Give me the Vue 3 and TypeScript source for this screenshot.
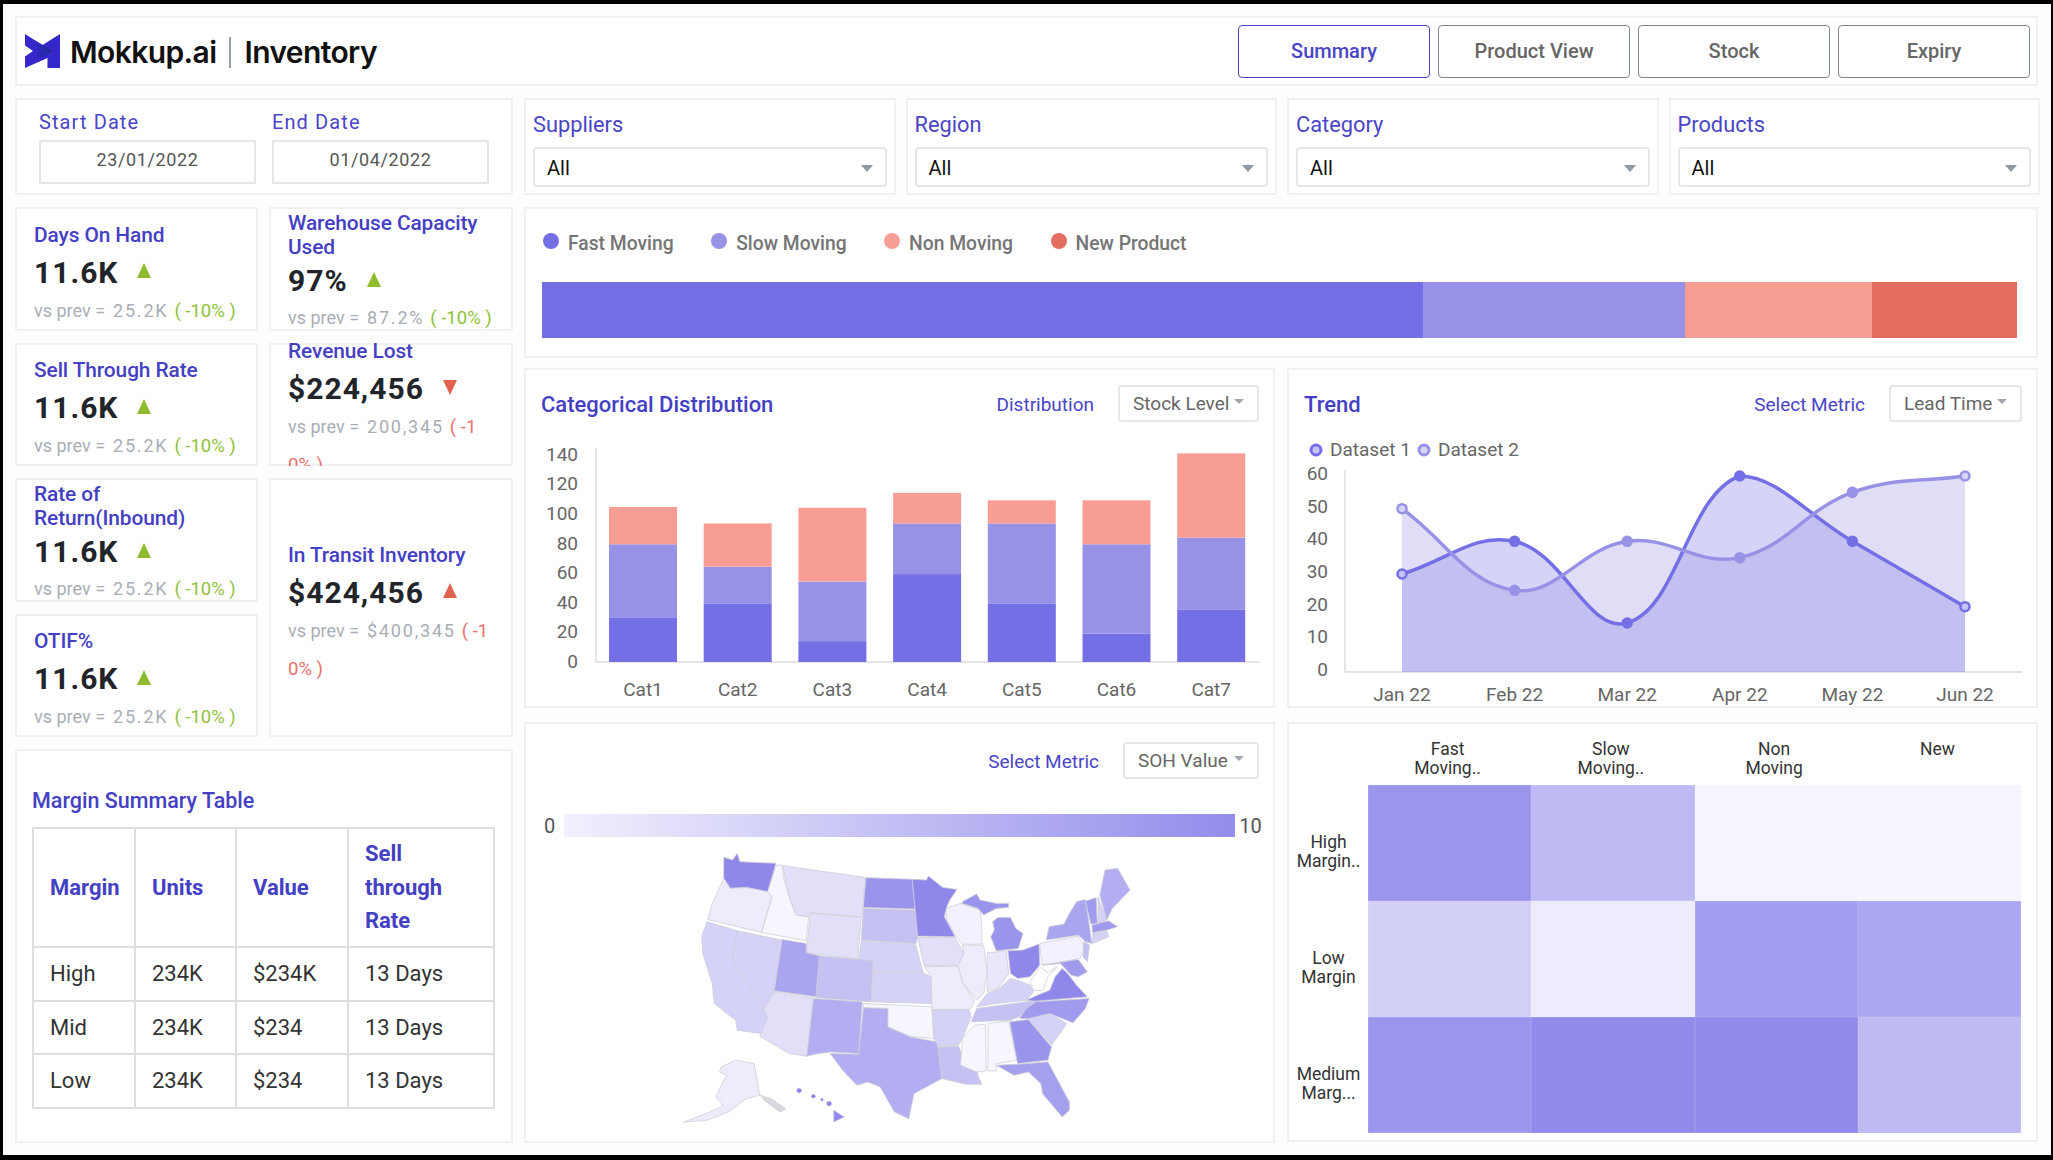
<script setup lang="ts">
const tabs = ['Summary', 'Product View', 'Stock', 'Expiry']
const filters = ['Suppliers', 'Region', 'Category', 'Products']
const legend = [
  { label: 'Fast Moving', color: '#756fe6' },
  { label: 'Slow Moving', color: '#9892e6' },
  { label: 'Non Moving', color: '#f89d94' },
  { label: 'New Product', color: '#e26d60' },
]
const stockBar = [
  { width: 881, color: '#756fe6' },
  { width: 262, color: '#9892e6' },
  { width: 187, color: '#f89d94' },
  { width: 145, color: '#e26d60' },
]

interface Kpi {
  title: string
  value: string
  prev: string
  delta: string
  // the two red tiles break their delta mid-number, as the reference does
  deltaRest?: string
  dir: 'up' | 'down'
  tone: 'good' | 'bad'
  twoLine?: boolean
}
const kpis: Kpi[] = [
  { title: 'Days On Hand', value: '11.6K', prev: '25.2K', delta: '( -10% )', dir: 'up', tone: 'good' },
  { title: 'Warehouse Capacity Used', value: '97%', prev: '87.2%', delta: '( -10% )', dir: 'up', tone: 'good', twoLine: true },
  { title: 'Sell Through Rate', value: '11.6K', prev: '25.2K', delta: '( -10% )', dir: 'up', tone: 'good' },
  { title: 'Revenue Lost', value: '$224,456', prev: '200,345', delta: '( -1', deltaRest: '0% )', dir: 'down', tone: 'bad' },
  { title: 'Rate of Return(Inbound)', value: '11.6K', prev: '25.2K', delta: '( -10% )', dir: 'up', tone: 'good', twoLine: true },
  { title: 'In Transit Inventory', value: '$424,456', prev: '$400,345', delta: '( -1', deltaRest: '0% )', dir: 'up', tone: 'bad' },
  { title: 'OTIF%', value: '11.6K', prev: '25.2K', delta: '( -10% )', dir: 'up', tone: 'good' },
]

const marginRows = [
  ['High', '234K', '$234K', '13 Days'],
  ['Mid', '234K', '$234', '13 Days'],
  ['Low', '234K', '$234', '13 Days'],
]

// stacked bars, drawn in page coordinates
const barBase = 662
const barUnit = 1.49
const barColors = ['#756fe6', '#9892e6', '#f89d94']
const barData = [
  [30, 49, 25],
  [39, 25, 29],
  [14, 40, 49.5],
  [59, 34, 20.5],
  [39, 54, 15.5],
  [19, 60, 29.5],
  [35, 48.5, 56.5],
]
const barTicks = [0, 20, 40, 60, 80, 100, 120, 140]
const bars = barData.map((vals, i) => {
  let acc = 0
  const x = 609 + i * 94.7
  return {
    name: `Cat${i + 1}`,
    x,
    rects: vals.map((v, k) => {
      acc += v
      return { y: barBase - acc * barUnit, h: v * barUnit, color: barColors[k] }
    }),
  }
})

// trend lines
const trendBase = 672
const trendUnit = 3.267
const trendX = (i: number) => 1402 + i * 112.6
const trendY = (v: number) => trendBase - v * trendUnit
const trendTicks = [0, 10, 20, 30, 40, 50, 60]
const months = ['Jan 22', 'Feb 22', 'Mar 22', 'Apr 22', 'May 22', 'Jun 22']
const clampY = (y: number) => Math.min(trendBase, Math.max(trendY(60), y))

function splinePath(values: number[]) {
  const pts = values.map((v, i) => ({ x: trendX(i), y: trendY(v) }))
  const t = 0.4
  const ctrl = pts.map((p, i) => {
    const a = pts[Math.max(i - 1, 0)]
    const b = pts[Math.min(i + 1, pts.length - 1)]
    const d01 = Math.hypot(p.x - a.x, p.y - a.y)
    const d12 = Math.hypot(b.x - p.x, b.y - p.y)
    const sum = d01 + d12 || 1
    const fa = (t * d01) / sum
    const fb = (t * d12) / sum
    return {
      px: p.x - fa * (b.x - a.x),
      py: clampY(p.y - fa * (b.y - a.y)),
      nx: p.x + fb * (b.x - a.x),
      ny: clampY(p.y + fb * (b.y - a.y)),
    }
  })
  let d = `M${pts[0].x} ${pts[0].y}`
  for (let i = 1; i < pts.length; i++) {
    d += ` C${ctrl[i - 1].nx} ${ctrl[i - 1].ny} ${ctrl[i].px} ${ctrl[i].py} ${pts[i].x} ${pts[i].y}`
  }
  return d
}

const series = [
  { name: 'Dataset 1', values: [30, 40, 15, 60, 40, 20], stroke: '#756fe6', dot: '#c5c2f5', fill: 'rgba(117,111,230,.3)', lx: 1316 },
  { name: 'Dataset 2', values: [50, 25, 40, 35, 55, 60], stroke: '#9892e6', dot: '#d6d4f7', fill: 'rgba(152,146,230,.3)', lx: 1424 },
].map((s) => {
  const line = splinePath(s.values)
  return {
    ...s,
    line,
    area: `${line} L${trendX(5)} ${trendBase} L${trendX(0)} ${trendBase} Z`,
    dots: s.values.map((v, i) => ({
      x: trendX(i),
      y: trendY(v),
      fill: i === 0 || i === s.values.length - 1 ? s.dot : s.stroke,
    })),
  }
})

// state shapes traced off the reference, viewBox is in its own units
const states = [
  { c: '#8f88ea', p: '237,172 262,180 275,160 282,185 383,190 360,275 300,262 255,265 237,235' },
  { c: '#eeecfb', p: '237,235 255,265 300,262 360,275 372,290 343,397 192,358 205,310' },
  { c: '#f6f6fe', p: '385,195 400,195 405,235 425,305 440,345 475,350 468,422 343,397 372,290 360,275' },
  { c: '#e2dff9', p: '403,197 632,232 625,350 478,338 475,350 440,345 425,305 413,260' },
  { c: '#e2dff9', p: '480,340 622,352 612,477 468,458' },
  { c: '#9a95ec', p: '635,233 765,238 773,327 628,322' },
  { c: '#c5c1f3', p: '628,325 773,330 780,410 775,432 745,428 622,420' },
  { c: '#d5d2f7', p: '622,422 745,430 775,435 795,516 655,514 655,482 615,478' },
  { c: '#c5c1f3', p: '505,467 655,482 650,605 495,592' },
  { c: '#d5d2f7', p: '655,517 795,518 818,530 818,610 652,605' },
  { c: '#aaa5ef', p: '400,418 468,430 468,458 505,467 495,590 378,572' },
  { c: '#d5d2f7', p: '275,392 400,420 378,572 360,628 345,618 260,482' },
  { c: '#d5d2f7', p: '190,365 275,392 260,482 345,618 360,655 340,700 275,690 270,660 210,610 205,550 178,460 175,410' },
  { c: '#e2dff9', p: '378,575 488,593 470,768 420,760 338,708 358,655 350,625' },
  { c: '#b3aef1', p: '488,595 625,605 615,760 535,755 490,762 470,768' },
  { c: '#b3aef1', p: '628,622 697,625 697,680 760,710 835,725 848,835 770,880 755,955 715,935 675,860 640,845 610,855 570,810 535,760 615,762' },
  { c: '#f6f6fe', p: '628,610 820,620 825,715 760,708 697,680 697,625 628,622' },
  { c: '#8f88ea', p: '765,238 805,240 810,228 850,262 890,268 870,300 860,325 855,350 885,410 780,408 773,327' },
  { c: '#e2dff9', p: '780,412 885,412 910,460 895,495 798,497' },
  { c: '#eeecfb', p: '800,500 895,498 905,545 940,605 925,630 820,628 818,530' },
  { c: '#d5d2f7', p: '822,630 925,628 930,650 905,715 895,735 838,738 826,715' },
  { c: '#c5c1f3', p: '838,740 895,738 905,770 945,790 950,830 960,852 915,852 848,835' },
  { c: '#f2f1fd', p: '860,325 900,310 955,330 960,380 960,432 905,432 885,405 860,355' },
  { c: '#eeecfb', p: '905,435 965,435 975,520 965,580 945,600 905,545 893,495 910,460' },
  { c: '#9a95ec', p: '905,305 945,282 955,300 1000,310 1035,310 1035,322 1000,325 965,345 950,325 905,310' },
  { c: '#9a95ec', p: '990,365 1005,352 1040,352 1055,385 1075,400 1062,445 1000,452 985,410 995,390' },
  { c: '#e9e7fb', p: '975,458 1028,452 1035,520 1005,565 975,575' },
  { c: '#8f88ea', p: '1033,452 1075,450 1120,432 1122,495 1095,530 1060,535 1040,520' },
  { c: '#d5d2f7', p: '945,620 975,580 1005,568 1040,535 1060,540 1095,555 1105,575 1085,600 1000,610' },
  { c: '#c5c1f3', p: '930,665 945,625 1085,605 1110,600 1065,650 1040,660' },
  { c: '#f6f6fe', p: '905,715 940,675 970,672 972,812 945,815 900,795' },
  { c: '#f6f6fe', p: '977,670 1035,663 1058,780 1000,790 1000,812 977,812' },
  { c: '#9a95ec', p: '1038,665 1090,658 1155,740 1145,780 1060,790' },
  { c: '#a5a0ee', p: '1000,795 1060,792 1145,785 1205,905 1205,930 1185,950 1130,880 1125,850 1090,815 1050,825' },
  { c: '#d5d2f7', p: '1090,655 1150,640 1198,670 1155,735' },
  { c: '#a09bed', p: '1065,655 1085,625 1110,605 1260,595 1250,625 1215,668 1150,640 1090,655' },
  { c: '#8f88ea', p: '1085,600 1115,585 1150,570 1165,530 1185,505 1200,520 1225,555 1255,590 1110,603' },
  { c: '#ffffff', p: '1095,545 1122,500 1145,518 1170,500 1145,530 1130,572 1105,570' },
  { c: '#f2f1fd', p: '1122,430 1230,408 1248,445 1235,475 1128,495' },
  { c: '#aaa5ef', p: '1140,420 1148,380 1190,372 1205,340 1225,305 1250,298 1260,370 1268,430 1250,425 1230,405' },
  { c: '#a09bed', p: '1130,495 1230,478 1255,515 1230,530 1210,525 1180,490' },
  { c: '#c5c1f3', p: '1245,425 1262,435 1255,485 1243,470' },
  { c: '#a09bed', p: '1250,303 1280,293 1283,370 1265,372' },
  { c: '#d5d2f7', p: '1285,290 1310,360 1285,370' },
  { c: '#b3aef1', p: '1305,210 1340,205 1375,270 1325,325 1310,360 1290,285' },
  { c: '#a09bed', p: '1268,375 1315,362 1340,380 1310,390 1270,398' },
  { c: '#d5d2f7', p: '1270,400 1310,392 1315,410 1270,430' },
  { c: '#eeecfb', p: '230,800 270,780 322,790 338,885 300,895 250,935 190,960 125,965 210,930 235,915 215,890 232,850 245,825 225,815' },
  { c: '#d8d8de', p: '340,885 370,895 410,925 395,935 350,900' },
  { c: '#8f88ea', p: '545,930 575,950 545,965' },
]
const islands = [
  { x: 448, y: 871, r: 7 },
  { x: 488, y: 888, r: 6 },
  { x: 512, y: 898, r: 4 },
  { x: 532, y: 910, r: 7 },
]

const heatCols = [['Fast', 'Moving..'], ['Slow', 'Moving..'], ['Non', 'Moving'], ['New']]
const heatRows = [
  { label: ['High', 'Margin..'], cells: ['#9b95ee', '#bebaf4', '#f5f5fe', '#f5f5fe'] },
  { label: ['Low', 'Margin'], cells: ['#d2cff7', '#eeebfc', '#a39ef0', '#aba7f1'] },
  { label: ['Medium', 'Marg...'], cells: ['#9b95ee', '#928beb', '#928beb', '#bebaf4'] },
]
</script>

<template>
  <div class="page">
    <header class="card topbar">
      <div class="brand">
        <svg class="logo" viewBox="0 0 35 34" width="35" height="34">
          <defs>
            <linearGradient id="logoFade" x1="0" x2="1" y1="0" y2="0">
              <stop offset="0" stop-color="#3527c9" />
              <stop offset="1" stop-color="#1c2a90" />
            </linearGradient>
          </defs>
          <path d="M0 0L17.5 11L35 0V34H22.5V24L0 34V22.5L8 17L0 11.5Z" fill="#3527c9" />
          <path d="M9 6L28 17L9 28L14 17Z" fill="url(#logoFade)" />
        </svg>
        <span class="brand-name">Mokkup.ai</span>
        <span class="brand-rule" />
        <span class="brand-name">Inventory</span>
      </div>
      <nav class="tabs">
        <button v-for="(tab, i) in tabs" :key="tab" class="tab" :class="{ active: i === 0 }">{{ tab }}</button>
      </nav>
    </header>

    <div class="body">
      <aside class="side">
        <section class="card dates">
          <div class="date">
            <div class="date-label">Start Date</div>
            <div class="date-box">23/01/2022</div>
          </div>
          <div class="date">
            <div class="date-label">End Date</div>
            <div class="date-box">01/04/2022</div>
          </div>
        </section>

        <section class="kpis">
          <div v-for="k in kpis" :key="k.title" class="card kpi" :class="{ 'two-line': k.twoLine }">
            <div class="kpi-title">{{ k.title }}</div>
            <div class="kpi-value">
              {{ k.value }}
              <span class="tri" :class="[k.dir, k.tone]" />
            </div>
            <div class="kpi-prev">
              <span class="prev-label">vs prev =</span>
              <span class="prev-value">{{ k.prev }}</span>
              <span class="prev-delta" :class="k.tone">{{ k.delta }}<template v-if="k.deltaRest"><br />{{ k.deltaRest }}</template></span>
            </div>
          </div>
        </section>

        <section class="card margin">
          <h3 class="margin-title">Margin Summary Table</h3>
          <table class="margin-table">
            <colgroup>
              <col style="width: 102px" />
              <col style="width: 101px" />
              <col style="width: 112px" />
              <col />
            </colgroup>
            <thead>
              <tr>
                <th>Margin</th>
                <th>Units</th>
                <th>Value</th>
                <th>Sell through Rate</th>
              </tr>
            </thead>
            <tbody>
              <tr v-for="row in marginRows" :key="row[0]">
                <td v-for="cell in row" :key="cell">{{ cell }}</td>
              </tr>
            </tbody>
          </table>
        </section>
      </aside>

      <main class="main">
        <section class="filters">
          <div v-for="f in filters" :key="f" class="card filter">
            <div class="filter-label">{{ f }}</div>
            <div class="select">All<span class="select-arrow" /></div>
          </div>
        </section>

        <section class="card stock">
          <div class="stock-legend">
            <span v-for="l in legend" :key="l.label" class="stock-key">
              <i :style="{ background: l.color }" />{{ l.label }}
            </span>
          </div>
          <div class="stock-bar">
            <span v-for="s in stockBar" :key="s.color" :style="{ width: s.width + 'px', background: s.color }" />
          </div>
        </section>

        <section class="charts">
          <div class="card chart">
            <div class="chart-head">
              <h3 class="chart-title">Categorical Distribution</h3>
              <span class="chart-link">Distribution</span>
              <span class="drop stock-drop">Stock Level<i /></span>
            </div>
            <svg class="plot" viewBox="526 440 747 266" width="747" height="266">
              <line x1="596" y1="448" x2="596" y2="662" class="axis" />
              <line x1="596" y1="662" x2="1260" y2="662" class="axis" />
              <text v-for="t in barTicks" :key="t" x="578" :y="662 - (t / 20) * 29.6 + 6" text-anchor="end" class="tick">{{ t }}</text>
              <g v-for="b in bars" :key="b.name">
                <rect v-for="r in b.rects" :key="r.color" :x="b.x" :y="r.y" width="68" :height="r.h" :fill="r.color" />
                <text :x="b.x + 34" y="696" text-anchor="middle" class="tick">{{ b.name }}</text>
              </g>
            </svg>
          </div>

          <div class="card chart">
            <div class="chart-head">
              <h3 class="chart-title">Trend</h3>
              <span class="chart-link">Select Metric</span>
              <span class="drop lead-drop">Lead Time<i /></span>
            </div>
            <svg class="plot" viewBox="1289 440 747 266" width="747" height="266">
              <g v-for="s in series" :key="s.name">
                <circle :cx="s.lx" cy="450" r="5" :fill="s.dot" :stroke="s.stroke" stroke-width="3" />
                <text :x="s.lx + 14" y="456" class="tick">{{ s.name }}</text>
              </g>
              <line x1="1345" y1="470" x2="1345" y2="672" class="axis" />
              <line x1="1345" y1="672" x2="2022" y2="672" class="axis" />
              <text v-for="t in trendTicks" :key="t" x="1328" :y="672 - t * 3.267 + 4" text-anchor="end" class="tick">{{ t }}</text>
              <text v-for="(m, i) in months" :key="m" :x="trendX(i)" y="701" text-anchor="middle" class="tick">{{ m }}</text>
              <path v-for="s in series" :key="s.name" :d="s.area" :fill="s.fill" />
              <g v-for="s in series" :key="s.name">
                <path :d="s.line" fill="none" :stroke="s.stroke" stroke-width="3.5" />
                <circle v-for="d in s.dots" :key="d.x" :cx="d.x" :cy="d.y" r="4.5" :fill="d.fill" :stroke="s.stroke" stroke-width="2.5" />
              </g>
            </svg>
          </div>
        </section>

        <section class="bottom">
          <div class="card geo">
            <div class="geo-head">
              <span class="chart-link">Select Metric</span>
              <span class="drop soh-drop">SOH Value<i /></span>
            </div>
            <div class="scale">
              <span>0</span>
              <div class="scale-bar" />
              <span>10</span>
            </div>
            <svg class="map" viewBox="120 150 1280 830" width="457" height="277" preserveAspectRatio="none">
              <polygon v-for="s in states" :key="s.p" :points="s.p" :fill="s.c" stroke="#cdcdd6" stroke-width="2.2" stroke-linejoin="round" />
              <circle v-for="d in islands" :key="d.x" :cx="d.x" :cy="d.y" :r="d.r" fill="#8f88ea" />
            </svg>
          </div>

          <div class="card heat">
            <div class="heat-cols">
              <div v-for="(c, i) in heatCols" :key="i" class="heat-col">
                <div v-for="line in c" :key="line">{{ line }}</div>
              </div>
            </div>
            <div class="heat-body">
              <div class="heat-labels">
                <div v-for="r in heatRows" :key="r.label[0]" class="heat-label">
                  <div v-for="line in r.label" :key="line">{{ line }}</div>
                </div>
              </div>
              <div class="heat-grid">
                <template v-for="r in heatRows" :key="r.label[0]">
                  <div v-for="(cell, i) in r.cells" :key="i" class="heat-cell" :style="{ background: cell }" />
                </template>
              </div>
            </div>
          </div>
        </section>
      </main>
    </div>
  </div>
</template>

<style scoped>
.page {
  box-sizing: border-box;
  width: 2053px;
  height: 1160px;
  overflow: hidden;
  padding: 12px 13px 12px 12px;
  border-style: solid;
  border-color: #000;
  border-width: 4px 2px 5px 3px;
  background: #fdfdfd;
  font-family: Roboto, "Liberation Sans", sans-serif;
  color: #333;
}
.card {
  box-sizing: border-box;
  background: #fff;
  border: 2px solid #f1f1f1;
}
h3 {
  margin: 0;
  font-weight: 500;
}

/* top bar */
.topbar {
  display: flex;
  align-items: center;
  justify-content: space-between;
  height: 70px;
  padding: 0 6px 0 8px;
  width: 2023px;
}
.brand {
  display: flex;
  align-items: center;
  font-family: Inter, Roboto, sans-serif;
}
.logo {
  margin-right: 10px;
}
.brand-name {
  padding-top: 2px;
  font-size: 30px;
  font-weight: 600;
  letter-spacing: -0.6px;
  color: #111;
}
.brand-rule {
  width: 2px;
  height: 31px;
  margin: 2px 13px 0;
  background: #9aa2b1;
}
.tabs {
  display: flex;
  gap: 8px;
}
.tab {
  box-sizing: border-box;
  width: 192px;
  height: 53px;
  background: #fff;
  border: 1.5px solid #7a848c;
  border-radius: 4px;
  font: 500 20px Roboto, sans-serif;
  color: #666;
}
.tab.active {
  border-color: #4a45c6;
  color: #4a45c6;
}

/* page columns */
.body {
  display: flex;
  gap: 11px;
  margin-top: 12px;
}
.side {
  display: flex;
  flex-direction: column;
  gap: 12px;
  width: 498px;
}
.main {
  display: flex;
  flex-direction: column;
  width: 1516px;
}

/* dates */
.dates {
  display: flex;
  gap: 16px;
  height: 97px;
  padding: 9px 0 0 22px;
}
.date {
  width: 217px;
}
.date-label {
  font-size: 20px;
  line-height: 26px;
  letter-spacing: 1.1px;
  color: #4a45c6;
}
.date-box {
  box-sizing: border-box;
  height: 44px;
  margin-top: 5px;
  padding-top: 6px;
  border: 2px solid #e6e6e6;
  text-align: center;
  font-size: 18px;
  line-height: 24px;
  letter-spacing: 0.6px;
  color: #555;
}

/* kpi tiles */
.kpis {
  display: grid;
  grid-template-columns: 243px 244px;
  grid-auto-rows: 123.5px;
  gap: 12px 11px;
  grid-template-areas:
    'a b'
    'c d'
    'e f'
    'g f';
}
.kpi:nth-child(1) { grid-area: a; }
.kpi:nth-child(2) { grid-area: b; }
.kpi:nth-child(3) { grid-area: c; }
.kpi:nth-child(4) { grid-area: d; }
.kpi:nth-child(5) { grid-area: e; }
.kpi:nth-child(6) { grid-area: f; }
.kpi:nth-child(7) { grid-area: g; }
.kpi {
  display: flex;
  flex-direction: column;
  justify-content: center;
  overflow: clip;
  overflow-clip-margin: 2px;
  padding: 15px 10px 0 17px;
}
.kpi.two-line {
  padding-bottom: 4px;
}
.kpi-title {
  flex: none;
  font-size: 20.9px;
  font-weight: 500;
  line-height: 24px;
  letter-spacing: -0.1px;
  color: #4440c4;
}
.kpi-value {
  flex: none;
  display: flex;
  align-items: center;
  gap: 19px;
  margin-top: 7px;
  font-size: 30px;
  font-weight: 700;
  line-height: 38px;
  letter-spacing: 1px;
  color: #212529;
}
.two-line .kpi-value {
  margin-top: 3px;
  margin-bottom: -1px;
}
.tri {
  width: 0;
  height: 0;
  border-left: 7.5px solid transparent;
  border-right: 7.5px solid transparent;
  margin-top: -4px;
}
.tri.up {
  border-bottom: 15px solid #8fbc2d;
}
.tri.down {
  border-top: 15px solid #e0634f;
}
.tri.bad.up {
  border-bottom-color: #e0634f;
}
.kpi-prev {
  flex: none;
  font-size: 18px;
  line-height: 38px;
  color: #a8aeb5;
  white-space: nowrap;
}
.prev-label {
  margin-right: 8px;
}
.prev-value {
  margin-right: 6px;
  letter-spacing: 1.8px;
}
.prev-delta {
  font-size: 18.5px;
}
.prev-delta.good {
  color: #8fc23a;
}
.prev-delta.bad {
  color: #e8706a;
}

/* margin table */
.margin {
  height: 394px;
  padding: 38px 0 0 15px;
}
.margin-title {
  font-size: 21.5px;
  line-height: 24px;
  color: #4440c4;
}
.margin-table {
  width: 463px;
  margin-top: 14px;
  table-layout: fixed;
  border-collapse: collapse;
  font-size: 22px;
}
.margin-table th,
.margin-table td {
  border: 2.5px solid #dedede;
  padding: 0 12px 0 16px;
  text-align: left;
}
.margin-table th {
  height: 117px;
  line-height: 33.5px;
  font-weight: 700;
  color: #4440c4;
}
.margin-table th:last-child {
  padding-right: 34px;
}
.margin-table td {
  height: 51.5px;
  color: #333;
}

/* filters */
.filters {
  display: flex;
  gap: 10px;
}
.filter {
  width: 371.5px;
  height: 97px;
  padding: 12px 7px 0;
}
.filter-label {
  font-size: 21.8px;
  line-height: 26px;
  color: #4a45c6;
}
.select {
  position: relative;
  box-sizing: border-box;
  height: 40px;
  margin-top: 9px;
  padding-left: 12px;
  border: 2px solid #e6e6e6;
  border-radius: 4px;
  font-size: 20px;
  line-height: 38px;
  color: #111;
}
.select-arrow {
  position: absolute;
  right: 12px;
  top: 16px;
  border-left: 6.5px solid transparent;
  border-right: 6.5px solid transparent;
  border-top: 7px solid #8f99a3;
}

/* stock bar */
.stock {
  width: 1514px;
  height: 151px;
  margin-top: 12px;
  padding: 0 0 0 16px;
}
.stock-legend {
  display: flex;
  height: 73px;
  align-items: flex-start;
  padding: 23px 0 0 1px;
  box-sizing: border-box;
}
.stock-key {
  display: flex;
  align-items: center;
  margin-right: 37.5px;
  font-size: 19.3px;
  font-weight: 500;
  line-height: 24px;
  color: #757575;
}
.stock-key i {
  flex: none;
  width: 16px;
  height: 16px;
  margin: -6px 9px 0 0;
  border-radius: 50%;
}
.stock-bar {
  display: flex;
  height: 56px;
}
.stock-bar span {
  display: block;
}

/* charts */
.charts {
  display: flex;
  gap: 12px;
  margin-top: 10px;
}
.chart {
  width: 751px;
  height: 340px;
}
.chart-head {
  display: flex;
  align-items: center;
  height: 37px;
  margin: 15px 14px 18px 15px;
}
.chart-title {
  flex: 1;
  padding-top: 2px;
  font-size: 22px;
  color: #4440c4;
}
.chart-link {
  padding-top: 1px;
  font-size: 19px;
  color: #4a45c6;
}
.drop {
  box-sizing: border-box;
  position: relative;
  display: block;
  height: 37px;
  padding-left: 13px;
  border: 2px solid #e6e6e6;
  border-radius: 4px;
  font-size: 19px;
  line-height: 33px;
  color: #666;
  white-space: nowrap;
}
.drop i {
  position: absolute;
  right: 13px;
  top: 12px;
  border-left: 5px solid transparent;
  border-right: 5px solid transparent;
  border-top: 5px solid #a0a6ad;
}
.stock-drop {
  width: 141px;
  margin-left: 24px;
}
.lead-drop {
  width: 133px;
  margin-left: 24px;
}
.soh-drop {
  width: 136px;
  margin-left: 24px;
}
.plot {
  display: block;
}
.axis {
  stroke: #e5e5e5;
  stroke-width: 2;
}
.tick {
  font-size: 19px;
  fill: #666;
}

/* bottom row */
.bottom {
  display: flex;
  gap: 12px;
  margin-top: 14px;
}
.geo {
  width: 751px;
  height: 421px;
}
.geo-head {
  display: flex;
  align-items: center;
  justify-content: flex-end;
  margin: 18px 14px 0 0;
}
.scale {
  display: flex;
  align-items: center;
  height: 23px;
  margin: 35px 0 0 18px;
  font-size: 20px;
  color: #555;
}
.scale-bar {
  width: 671px;
  height: 23px;
  margin: 0 4px 0 9px;
  background: linear-gradient(90deg, #f1f0fd, #938deb);
}
.map {
  display: block;
  margin: 13px 0 0 156px;
  filter: blur(0.6px);
}

/* heatmap */
.heat {
  width: 751px;
  height: 420px;
  padding: 16px 15px 0 0;
}
.heat-cols {
  display: grid;
  grid-template-columns: repeat(4, 163.25px);
  height: 45px;
  margin-left: 74px;
  padding-left: 3px;
  font-size: 17.5px;
  line-height: 19px;
  text-align: center;
  color: #333;
}
.heat-body {
  display: flex;
}
.heat-labels {
  width: 79px;
  display: grid;
  grid-template-rows: repeat(3, 116px);
  font-size: 17.5px;
  line-height: 19px;
  text-align: center;
  color: #333;
}
.heat-label {
  align-self: center;
  padding-top: 18px;
}
.heat-grid {
  display: grid;
  grid-template-columns: repeat(4, 163.25px);
  grid-template-rows: repeat(3, 116px);
}
.heat-cell {
  box-shadow: inset 0 0 0 0.5px rgba(255, 255, 255, 0.18);
}
</style>

<style>
html,
body {
  background: #000;
}
</style>
